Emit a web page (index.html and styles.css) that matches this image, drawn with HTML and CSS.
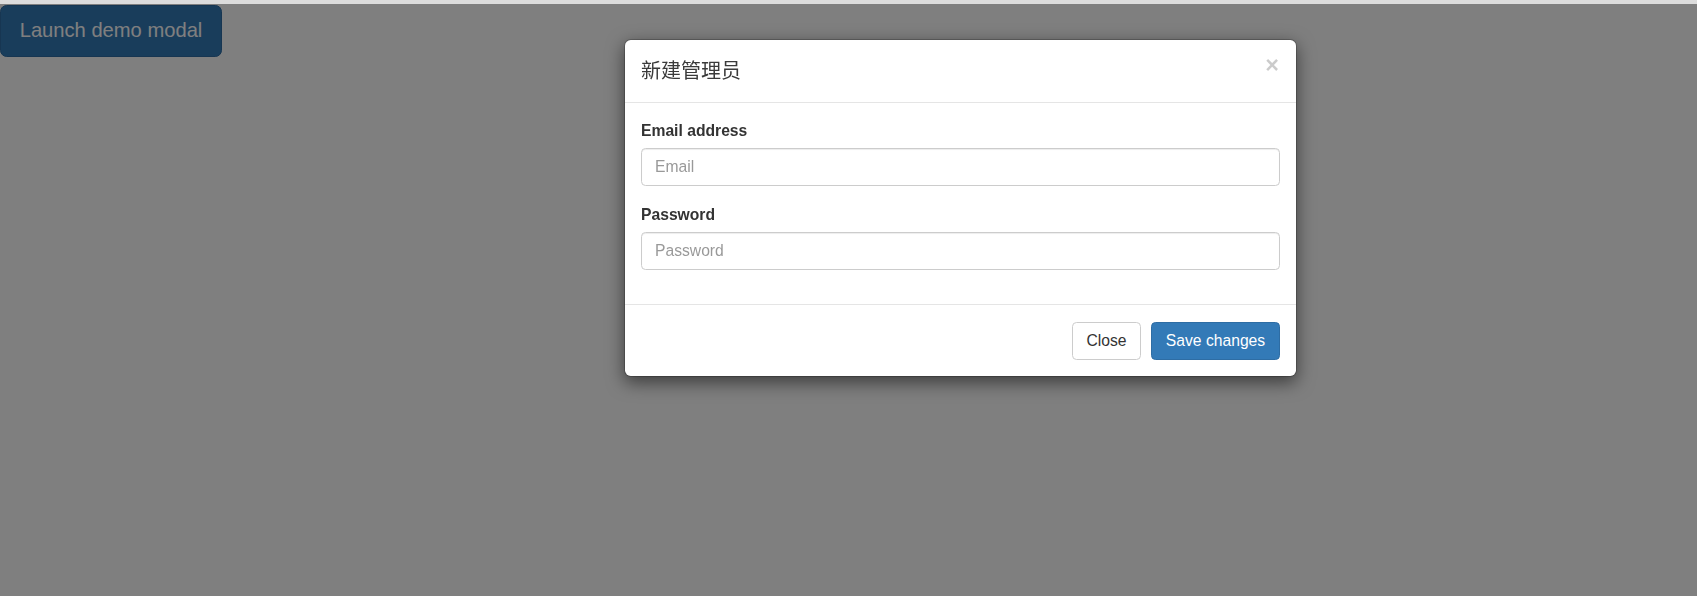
FILE: index.html
```html
<!DOCTYPE html>
<html lang="zh-CN">
<head>
<meta charset="utf-8">
<title>Modal</title>
<link rel="stylesheet" href="styles.css">
</head>
<body>
<div class="topbar"></div>
<button class="btn btn-primary btn-lg" type="button">Launch demo modal</button>
<div class="backdrop"></div>
<div class="modal" role="dialog">
  <div class="modal-header">
    <h4 class="modal-title">新建管理员</h4>
    <button class="close" type="button" aria-label="Close">×</button>
  </div>
  <div class="modal-body">
    <div class="form-group">
      <label class="label" for="email">Email address</label>
      <input class="form-control" id="email" type="email" placeholder="Email">
    </div>
    <div class="form-group last">
      <label class="label" for="pwd">Password</label>
      <input class="form-control" id="pwd" type="password" placeholder="Password">
    </div>
  </div>
  <div class="modal-footer">
    <button class="btn btn-default" type="button">Close</button>
    <button class="btn btn-primary" type="button">Save changes</button>
  </div>
</div>
</body>
</html>
```
FILE: styles.css
```css
* { box-sizing: border-box; }
html, body { margin: 0; padding: 0; }
body {
  background: #fff;
  font-family: "Liberation Sans", Arial, "Noto Sans CJK SC", sans-serif;
  font-size: 15.68px;
  line-height: 1.42857;
  color: #333;
  height: 596px;
  overflow: hidden;
}
.topbar {
  height: 4px;
  background: #dcdcdc;
  position: relative;
  z-index: 20;
}
.btn {
  display: inline-flex;
  align-items: center;
  justify-content: center;
  font-family: inherit;
  font-size: 15.68px;
  line-height: 1.42857;
  padding: 0 13px;
  height: 38px;
  border: 1px solid transparent;
  border-radius: 4.5px;
  cursor: pointer;
}
.btn-lg {
  margin-top: 1px;
  height: 52px;
  padding: 0 18px 2px;
  font-size: 20.16px;
  border-radius: 6.7px;
  width: 222px;
}
.btn-primary {
  background: #337ab7;
  border-color: #2e6da4;
  color: #fff;
}
.btn-default {
  background: #fff;
  border-color: #ccc;
  color: #333;
}
.backdrop {
  position: fixed;
  left: 0; right: 0; top: 4px; bottom: 0;
  background: rgba(0, 0, 0, 0.5);
  z-index: 10;
}
.modal {
  position: absolute;
  left: 624px;
  top: 39px;
  width: 673px;
  background: #fff;
  border: 1px solid rgba(0, 0, 0, 0.2);
  border-radius: 6.7px;
  box-shadow: 0 5.6px 17px rgba(0, 0, 0, 0.5);
  z-index: 30;
  background-clip: padding-box;
}
.modal-header {
  display: flex;
  align-items: flex-start;
  justify-content: space-between;
  padding: 17px 17px 17px 16px;
  border-bottom: 1px solid #e5e5e5;
}
.modal-title {
  margin: 0;
  font-family: "Liberation Sans", "Noto Sans CJK SC", sans-serif;
  font-size: 20px;
  font-weight: 400;
  line-height: 28px;
  color: #3a3a3a;
}
.close {
  background: none;
  border: 0;
  padding: 0;
  margin-top: -3px;
  font-family: "Liberation Sans", Arial, sans-serif;
  font-size: 23.5px;
  font-weight: 700;
  line-height: 1;
  color: #000;
  opacity: 0.2;
  cursor: pointer;
}
.modal-body {
  padding: 17px 16px;
}
.form-group {
  display: flex;
  flex-direction: column;
  margin-bottom: 18px;
}
.form-group.last { margin-bottom: 17px; }
.label {
  font-weight: 700;
  line-height: 22px;
  margin-bottom: 6px;
}
.form-control {
  height: 38px;
  width: 100%;
  padding: 6px 13px;
  font-family: inherit;
  font-size: 15.68px;
  color: #555;
  background: #fff;
  border: 1px solid #ccc;
  border-radius: 4.5px;
  box-shadow: inset 0 1px 1px rgba(0, 0, 0, 0.075);
}
.form-control::placeholder { color: #999; }
.modal-footer {
  display: flex;
  justify-content: flex-end;
  gap: 10px;
  padding: 17px 16px 16px;
  border-top: 1px solid #e5e5e5;
}
.modal-footer .btn-default { width: 69px; }
.modal-footer .btn-primary { width: 129px; }
```
